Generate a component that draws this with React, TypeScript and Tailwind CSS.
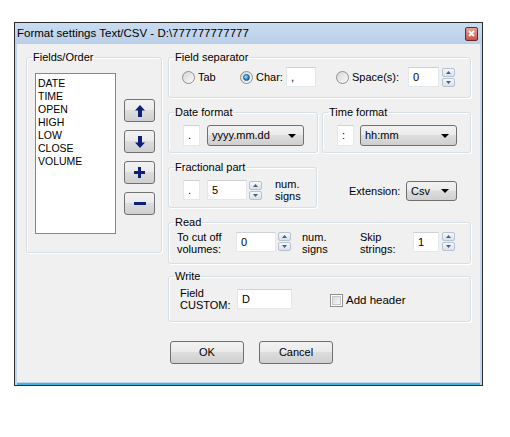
import React from 'react';

const btnBg =
  'bg-[linear-gradient(#f2f2f2_0%,#ebebeb_45%,#dddddd_50%,#cfcfcf_100%)]';

function Spin() {
  return (
    <div className="flex h-[19px] w-[13px] flex-col gap-[1px]">
      <div className="flex flex-1 items-center justify-center rounded-[2px] border border-[#b7c2d0] bg-gradient-to-b from-[#f5f8fb] to-[#d9e1eb]">
        <svg width="5" height="3" viewBox="0 0 5 3">
          <path d="M2.5 0 5 3H0z" fill="#4a5d7e" />
        </svg>
      </div>
      <div className="flex flex-1 items-center justify-center rounded-[2px] border border-[#b7c2d0] bg-gradient-to-b from-[#f5f8fb] to-[#d9e1eb]">
        <svg width="5" height="3" viewBox="0 0 5 3">
          <path d="M0 0h5L2.5 3z" fill="#4a5d7e" />
        </svg>
      </div>
    </div>
  );
}

function Box({ value, className }: { value: string; className: string }) {
  return (
    <div
      className={`flex items-center border border-[#e4e8ec] border-t-[#cdd2d7] bg-white pl-[4px] ${className}`}
    >
      {value}
    </div>
  );
}

function Combo({ value, className }: { value: string; className: string }) {
  return (
    <div
      className={`flex items-center justify-between rounded-[3px] border border-[#707070] ${btnBg} pl-[4px] pr-[7px] ${className}`}
    >
      <span>{value}</span>
      <svg width="8" height="4" viewBox="0 0 8 4">
        <path d="M0 0h8L4 4z" fill="#000" />
      </svg>
    </div>
  );
}

function Radio({ on }: { on?: boolean }) {
  return (
    <div className="flex h-[13px] w-[13px] shrink-0 items-center justify-center rounded-full border border-[#8e8f8f] bg-gradient-to-br from-[#d6d6d6] to-[#fbfbfb]">
      {on && (
        <div className="h-[7px] w-[7px] rounded-full border border-[#1b5c8f] bg-[radial-gradient(circle_at_35%_35%,#b9e4ff_0%,#2a8bd0_55%,#0f5d9c_100%)]" />
      )}
    </div>
  );
}

function Group({
  title,
  className,
  children,
}: {
  title: string;
  className: string;
  children?: React.ReactNode;
}) {
  return (
    <fieldset
      className={`rounded-[3px] border border-[#d5dfe5] shadow-[inset_1px_1px_0_#ffffff,1px_1px_0_#ffffff] ${className}`}
    >
      <legend className="ml-[5px] px-[1px] leading-[14px]">{title}</legend>
      {children}
    </fieldset>
  );
}

function NavBtn({ children }: { children: React.ReactNode }) {
  return (
    <div
      className={`flex h-[23px] w-[31px] items-center justify-center rounded-[3px] border border-[#707070] ${btnBg}`}
    >
      {children}
    </div>
  );
}

function Two({ a, b, className }: { a: string; b: string; className: string }) {
  return (
    <div className={`flex flex-col leading-[12px] ${className}`}>
      <span>{a}</span>
      <span>{b}</span>
    </div>
  );
}

export default function App() {
  const fields = ['DATE', 'TIME', 'OPEN', 'HIGH', 'LOW', 'CLOSE', 'VOLUME'];

  return (
    <div className="h-[437px] w-[510px] bg-white pl-[14px] pt-[22px] font-['Liberation_Sans',Arial,sans-serif] text-[11px] text-black">
      <div className="flex h-[364px] w-[469px] flex-col border border-[#2b2b2b] bg-[#c3d7ec]">
        {/* title bar */}
        <div className="flex h-[21px] items-center justify-between bg-gradient-to-b from-[#cadcf0] to-[#b9cfe8] pl-[2px] pr-[4px]">
          <span className="text-[11.5px]">Format settings Text/CSV - D:\777777777777</span>
          <div className="flex h-[14px] w-[13px] items-center justify-center rounded-[2px] border border-[#6b2a25] bg-gradient-to-b from-[#e6a59d] to-[#c2554a]">
            <svg width="7" height="7" viewBox="0 0 7 7">
              <path d="M1 1l5 5M6 1L1 6" stroke="#fff" strokeWidth="2" />
            </svg>
          </div>
        </div>

        {/* client area */}
        <div className="mx-[2px] flex h-[338px] bg-[#f0f0f0] pl-[9px] pt-[6px]">
          <Group title="Fields/Order" className="h-[203px] w-[136px]">
            <div className="flex">
              <div className="ml-[8px] mt-[9px] h-[161px] w-[81px] border border-[#828790] bg-white pl-[2px] pt-[3px] leading-[13px] text-[10.5px]">
                {fields.map((f) => (
                  <div key={f}>{f}</div>
                ))}
              </div>
              <div className="ml-[8px] mt-[35px] flex flex-col gap-[8px]">
                <NavBtn>
                  <svg width="10" height="12" viewBox="0 0 10 12">
                    <path d="M5 0l5 5.5H7V12H3V5.5H0z" fill="#0d1f7c" />
                  </svg>
                </NavBtn>
                <NavBtn>
                  <svg width="10" height="12" viewBox="0 0 10 12">
                    <path d="M5 12l5-5.5H7V0H3v6.5H0z" fill="#0d1f7c" />
                  </svg>
                </NavBtn>
                <NavBtn>
                  <svg width="11" height="11" viewBox="0 0 11 11">
                    <path d="M4 0h3v4h4v3H7v4H4V7H0V4h4z" fill="#0d1f7c" />
                  </svg>
                </NavBtn>
                <NavBtn>
                  <svg width="12" height="3" viewBox="0 0 12 3">
                    <rect width="12" height="3" fill="#0d1f7c" />
                  </svg>
                </NavBtn>
              </div>
            </div>
          </Group>

          <div className="ml-[6px] flex w-[303px] flex-col">
            <Group title="Field separator" className="h-[48px]">
              <div className="mt-[3px] flex h-[20px] items-center">
                <div className="ml-[13px]">
                  <Radio />
                </div>
                <span className="ml-[3px] w-[42px]">Tab</span>
                <Radio on />
                <span className="ml-[3px] w-[30px]">Char:</span>
                <Box value="," className="h-[20px] w-[30px]" />
                <div className="ml-[20px]">
                  <Radio />
                </div>
                <span className="ml-[3px] w-[56px]">Space(s):</span>
                <Box value="0" className="h-[20px] w-[31px]" />
                <div className="ml-[3px]">
                  <Spin />
                </div>
              </div>
            </Group>

            <div className="mt-[7px] flex gap-[4px]">
              <Group title="Date format" className="h-[48px] w-[150px]">
                <div className="mt-[6px] flex h-[21px]">
                  <Box value="." className="ml-[14px] w-[17px]" />
                  <Combo value="yyyy.mm.dd" className="ml-[7px] w-[97px]" />
                </div>
              </Group>
              <Group title="Time format" className="h-[48px] w-[149px]">
                <div className="mt-[6px] flex h-[21px]">
                  <Box value=":" className="ml-[14px] w-[17px]" />
                  <Combo value="hh:mm" className="ml-[6px] w-[97px]" />
                </div>
              </Group>
            </div>

            <div className="mt-[7px] flex">
              <Group title="Fractional part" className="h-[48px] w-[149px]">
                <div className="mt-[6px] flex h-[20px] items-center">
                  <Box value="." className="ml-[14px] h-[20px] w-[17px]" />
                  <Box value="5" className="ml-[7px] h-[20px] w-[40px]" />
                  <div className="ml-[2px]">
                    <Spin />
                  </div>
                  <Two a="num." b="signs" className="ml-[13px]" />
                </div>
              </Group>
              <div className="ml-[32px] mt-[21px] flex h-[20px] items-center">
                <span className="w-[57px]">Extension:</span>
                <Combo value="Csv" className="h-[20px] w-[51px]" />
              </div>
            </div>

            <Group title="Read" className="mt-[7px] h-[49px]">
              <div className="flex items-start">
                <Two a="To cut off" b="volumes:" className="ml-[8px] mt-[2px] w-[59px]" />
                <Box value="0" className="mt-[3px] h-[20px] w-[40px]" />
                <div className="ml-[2px] mt-[3px]">
                  <Spin />
                </div>
                <Two a="num." b="signs" className="ml-[11px] mt-[2px] w-[58px]" />
                <Two a="Skip" b="strings:" className="mt-[2px] w-[53px]" />
                <Box value="1" className="mt-[3px] h-[20px] w-[26px]" />
                <div className="ml-[3px] mt-[3px]">
                  <Spin />
                </div>
              </div>
            </Group>

            <Group title="Write" className="mt-[5px] h-[53px]">
              <div className="flex items-start">
                <Two a="Field" b="CUSTOM:" className="ml-[11px] mt-[4px] w-[57px]" />
                <Box value="D" className="mt-[6px] h-[20px] w-[55px]" />
                <div className="ml-[38px] mt-[9px] flex items-center">
                  <div className="flex h-[13px] w-[13px] items-center justify-center border border-[#8e8f8f] bg-white">
                    <div className="h-[9px] w-[9px] border border-[#c6c6c6] bg-gradient-to-br from-[#d9d9d9] to-[#f8f8f8]" />
                  </div>
                  <span className="ml-[3px] text-[11.5px]">Add header</span>
                </div>
              </div>
            </Group>

            <div className="ml-[2px] mt-[19px] flex gap-[15px]">
              <div
                className={`flex h-[23px] w-[74px] items-center justify-center rounded-[3px] border border-[#707070] ${btnBg}`}
              >
                OK
              </div>
              <div
                className={`flex h-[23px] w-[74px] items-center justify-center rounded-[3px] border border-[#707070] ${btnBg}`}
              >
                Cancel
              </div>
            </div>
          </div>
        </div>
        <div className="mx-[2px] mt-[1px] h-[2px] bg-[#41b3e0]" />
      </div>
    </div>
  );
}
